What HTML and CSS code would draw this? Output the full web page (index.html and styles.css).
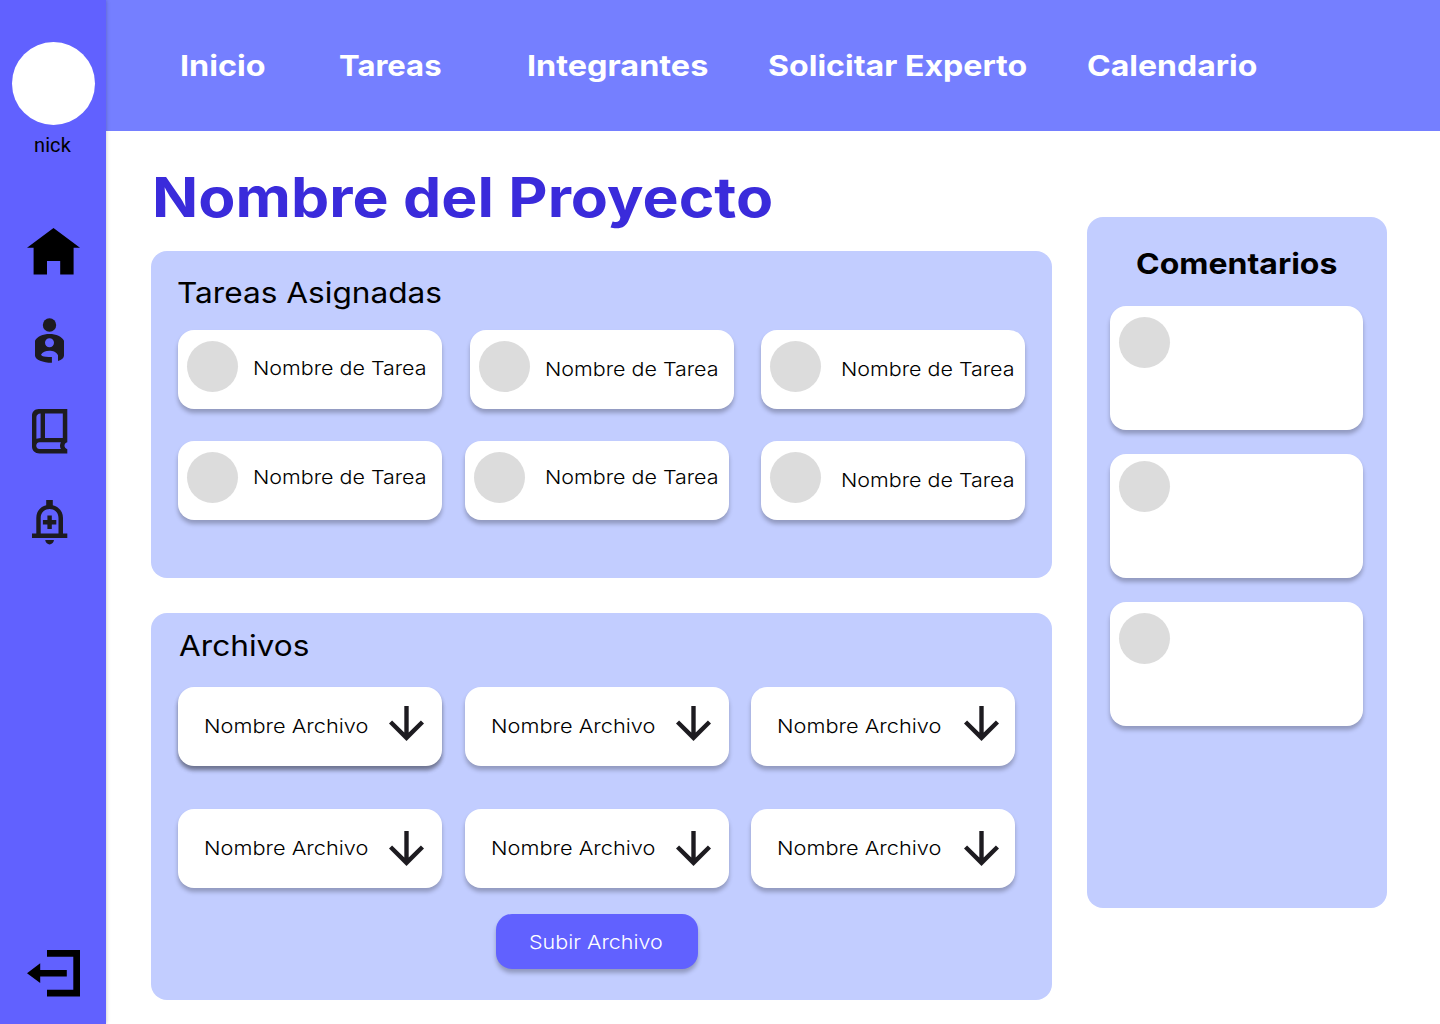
FILE: index.html
```html
<!DOCTYPE html>
<html lang="es">
<head>
<meta charset="utf-8">
<title>Nombre del Proyecto</title>
<link rel="stylesheet" href="styles.css">
</head>
<body>
<svg class="defs" width="0" height="0">
  <symbol id="down" viewBox="4 4 16 16"><path d="M11 4v12.17l-5.59-5.59L4 12l8 8 8-8-1.41-1.41L13 16.17V4z"/></symbol>
</svg>
<div class="app">
  <aside class="sidebar">
    <div class="profile"></div>
    <span class="nick">nick</span>
    <nav class="side-nav">
      <svg class="home" width="54" height="47" viewBox="0 0 54 47"><path d="M26.5 0 53 19.8H46.6V46.5H33.2V33H20V46.5H6.6V19.8H0z"/></svg>
      <svg class="person" width="30" height="46" viewBox="0 0 30 46"><circle cx="14.5" cy="7" r="6.7"/><path fill-rule="evenodd" d="M0 22.8C2 18.5 8 16 14.5 16S27 18.5 29 22.8V37.5C29 40 26.8 41.8 23 43V37.2C20.5 31.3 8.5 31.3 6 36.8 7.5 39.2 11 38.9 16.9 38.9V44.8C8 44.8 0 41.8 0 37.5zM14.5 20.2a4.5 4.5 0 1 0 0 9 4.5 4.5 0 0 0 0-9z"/></svg>
      <svg class="book" width="36" height="45" viewBox="0 0 36 45"><path fill-rule="evenodd" d="M6.7 0H35.3V33.3C31.6 34.3 31.6 39.2 35.3 40.2V44.5H7.5C3 44.5 0 41.5 0 37.5V6.7C0 2.8 2.8 0 6.7 0zM8.6 4.5C5.8 4.7 4.4 6 4.4 8.5V29.8L8.6 29zM13 4.5V28.9H30.8V4.5zM7.5 33.3C3.2 33.5 3.2 39.9 7.5 40.1H28.9C27.7 38 27.7 35.5 28.9 33.3z"/></svg>
      <svg class="bell" width="36" height="45" viewBox="0 0 36 45"><path fill-rule="evenodd" d="M14.2 0h6.6v5.2C27 6.8 31 11.6 31 18V33.5h4.3V38H0V33.5H4.3V18C4.3 11.6 8 6.8 14.2 5.2zM8.7 33.5H26.5V18C26.5 6 8.7 6 8.7 18zM15.4 15.5h4.4v4.6h4.5v4.4h-4.5v4.6h-4.4v-4.6h-4.5v-4.4h4.5zM13.2 40.1h8.8c-1 5.8-7.8 5.8-8.8 0z"/></svg>
    </nav>
    <svg class="exit" width="54" height="47" viewBox="0 0 54 47"><path d="M20 0H53V46.5H20V39.8H46.3V6.7H20zM0 23.2 13.2 13.2V20H39.8V26.5H13.2V33z"/></svg>
  </aside>
  <div class="page">
    <header class="topbar">
      <a class="n1">Inicio</a><a class="n2">Tareas</a><a class="n3">Integrantes</a><a class="n4">Solicitar Experto</a><a class="n5">Calendario</a>
    </header>
    <div class="content">
      <main>
        <h1><span>Nombre del Proyecto</span></h1>
        <section class="panel tasks">
          <h2><span>Tareas Asignadas</span></h2>
          <div class="row">
            <div class="card task"><i class="dot"></i><span>Nombre de Tarea</span></div>
            <div class="card task low"><i class="dot"></i><span>Nombre de Tarea</span></div>
            <div class="card task low far"><i class="dot"></i><span>Nombre de Tarea</span></div>
          </div>
          <div class="row second">
            <div class="card task high"><i class="dot"></i><span>Nombre de Tarea</span></div>
            <div class="card task high far"><i class="dot"></i><span>Nombre de Tarea</span></div>
            <div class="card task low far"><i class="dot"></i><span>Nombre de Tarea</span></div>
          </div>
        </section>
        <section class="panel files">
          <h2><span>Archivos</span></h2>
          <div class="grid">
            <div class="card file strong"><span>Nombre Archivo</span><svg><use href="#down"/></svg></div>
            <div class="card file"><span>Nombre Archivo</span><svg><use href="#down"/></svg></div>
            <div class="card file last"><span>Nombre Archivo</span><svg><use href="#down"/></svg></div>
            <div class="card file lower"><span>Nombre Archivo</span><svg><use href="#down"/></svg></div>
            <div class="card file lower"><span>Nombre Archivo</span><svg><use href="#down"/></svg></div>
            <div class="card file lower last"><span>Nombre Archivo</span><svg><use href="#down"/></svg></div>
          </div>
          <button class="upload"><span>Subir Archivo</span></button>
        </section>
      </main>
      <aside class="panel comments">
        <h3><span>Comentarios</span></h3>
        <div class="card comment"><i class="dot"></i></div>
        <div class="card comment raised"><i class="dot"></i></div>
        <div class="card comment"><i class="dot"></i></div>
      </aside>
    </div>
  </div>
</div>
</body>
</html>
```
FILE: styles.css
```css
* { box-sizing: border-box; }
body { margin: 0; background: #fff; color: #000; font-family: Inter, sans-serif; }
h1, h2, h3 { margin: 0; white-space: nowrap; }
.defs { display: block; position: absolute; }
.app { display: flex; width: 1440px; height: 1024px; overflow: hidden; }

.sidebar {
  display: flex; flex-direction: column; flex: none; z-index: 1;
  width: 106px; height: 1024px; padding-top: 42px;
  background: #6161ff; box-shadow: 0 0 4px rgba(0, 0, 0, .25);
}
.profile { width: 83px; height: 83px; margin-left: 12px; border-radius: 50%; background: #fff; }
.nick { margin: 8px 0 0 34px; font: 400 20px/24px Roboto, sans-serif; letter-spacing: .1px; }
.side-nav { display: flex; flex-direction: column; margin-top: 71px; }
.side-nav svg { display: block; fill: #1d1b20; }
.side-nav .home { margin-left: 27px; fill: #000; }
.side-nav .person { margin: 43px 0 0 35px; }
.side-nav .book { margin: 45px 0 0 32px; }
.side-nav .bell { margin: 46px 0 0 32px; }
.exit { margin: auto 0 27px 27px; }

.page { width: 1334px; }
.topbar {
  display: grid; grid-template-columns: 160px 187px 241px 319px auto;
  height: 131px; padding: 48px 0 0 74px; background: #757fff;
}
.topbar a { color: #fff; font-weight: 700; font-size: 29px; line-height: 36px; white-space: nowrap; }
.topbar a, h1 span, h2 span, h3 span, .card span, .upload span {
  display: inline-block; transform: scaleX(var(--stretch)); transform-origin: left;
}
.n1 { --stretch: 1.115; }
.n2 { --stretch: 1.07; margin-left: -1px; }
.n3 { --stretch: 1.117; }
.n4 { --stretch: 1.107; }
.n5 { --stretch: 1.104; }
h1 { --stretch: 1.104; }
h2 { --stretch: 1.09; }
h3 { --stretch: 1.103; }
.task { --stretch: 1.113; }
.file { --stretch: 1.128; }
.upload { --stretch: 1.114; }

.content { display: flex; justify-content: space-between; padding: 0 53px 0 45px; }
main { width: 901px; }
h1 { height: 120px; padding: 30px 0 0 1px; color: #3a2bdb; font-weight: 700; font-size: 55px; line-height: 72px; }
.panel { border-radius: 16px; background: #c2cdff; }
h2 { font-weight: 400; font-size: 29px; line-height: 36px; }
.card { border-radius: 16px; background: #fff; box-shadow: 0 4px 4px rgba(0, 0, 0, .25); }
.card span { font-weight: 300; font-size: 19.3px; line-height: 24px; white-space: nowrap; }
.dot { display: block; flex: none; width: 51px; height: 51px; border-radius: 50%; background: #dcdcdc; }

.tasks { height: 327px; padding: 24px 27px 0; }
.tasks h2 { height: 55px; margin-left: -1px; }
.row { display: grid; grid-template-columns: 292px 291px 264px; }
.row.second { grid-template-columns: 287px 296px 264px; margin-top: 32px; }
.task { display: flex; width: 264px; height: 79px; padding: 11px 0 0 9px; }
.task span { margin: 15px 0 0 15px; }
.task.low span { margin-top: 16px; }
.task.high span { margin-top: 13px; }
.task.far span { margin-left: 20px; }
.row.second .task:first-child span { margin-left: 15px; }

.files { height: 387px; margin-top: 35px; padding: 15px 27px 0; }
.files h2 { height: 59px; padding-left: 1px; }
.grid { display: grid; grid-template-columns: 287px 286px 264px; row-gap: 43px; }
.file { display: flex; justify-content: space-between; width: 264px; height: 79px; padding: 19px 18px 0 26px; }
.file span { margin-top: 8px; }
.file svg { width: 35px; height: 35px; fill: #1d1b20; }
.file.lower svg { margin-top: 3px; }
.file.last { padding-right: 16px; }
.strong { box-shadow: 0 4px 4px rgba(0, 0, 0, .25), 0 4px 4px rgba(0, 0, 0, .25); }
.upload {
  display: block; width: 202px; height: 55px; margin: 26px 0 0 318px; padding: 0 0 0 33px;
  border: 0; border-radius: 16px; background: #6161ff; box-shadow: 0 4px 4px rgba(0, 0, 0, .25);
  color: #fff; font: 300 19.3px/24px Inter, sans-serif; text-align: left;
}

.comments { width: 300px; height: 691px; margin-top: 86px; padding: 29px 23px 0; }
h3 { height: 60px; padding-left: 26px; font-weight: 700; font-size: 29px; line-height: 36px; }
.comment { width: 253px; height: 124px; margin-bottom: 24px; padding: 11px 0 0 9px; }
.comment.raised { padding-top: 7px; }
```
